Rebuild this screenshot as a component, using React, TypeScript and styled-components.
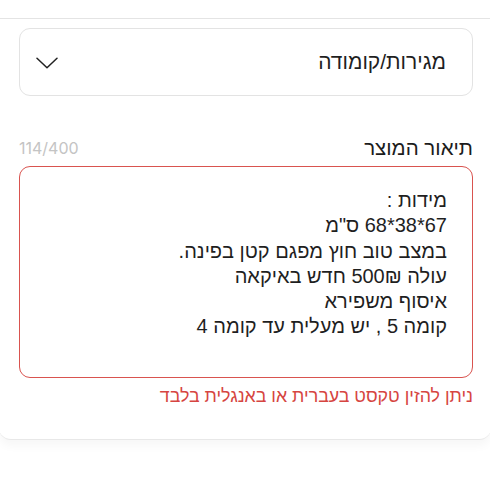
import styled, { createGlobalStyle } from "styled-components";

const GlobalStyle = createGlobalStyle`
  html, body {
    margin: 0;
    padding: 0;
    background: #ffffff;
    font-family: "Liberation Sans", "DejaVu Sans", sans-serif;
    color: #1c1c1c;
  }
  * {
    box-sizing: border-box;
  }
`;

const description = `מידות :
67*38*68 ס"מ
במצב טוב חוץ מפגם קטן בפינה.
עולה 500₪ חדש באיקאה
איסוף משפירא
קומה 5 , יש מעלית עד קומה 4`;

export default function App() {
  return (
    <>
      <GlobalStyle />
      <Page>
        <Card dir="rtl">
          <SelectBox>
            <SelectText>מגירות/קומודה</SelectText>
            <svg width="22" height="12" viewBox="0 0 22 12" fill="none">
              <path d="M1 1.2 L11 10.8 L21 1.2" stroke="#222" strokeWidth="1.5" strokeLinecap="round" strokeLinejoin="round" />
            </svg>
          </SelectBox>

          <LabelRow>
            <Label>תיאור המוצר</Label>
            <Counter>114/400</Counter>
          </LabelRow>

          <TextArea readOnly defaultValue={description} />

          <ErrorText>ניתן להזין טקסט בעברית או באנגלית בלבד</ErrorText>
        </Card>
      </Page>
    </>
  );
}

const Page = styled.div`
  width: 490px;
  height: 480px;
  padding-top: 18px;
  overflow: hidden;
`;

const Card = styled.div`
  margin: 0 -1px 0 -1px;
  background: #fff;
  border-top: 1px solid #e4e4e4;
  border-bottom: 1px solid #e8e8e8;
  border-radius: 0 0 12px 12px;
  box-shadow: 0 6px 10px rgba(0, 0, 0, 0.035);
  padding: 9px 18px 32px 20px;
  display: flex;
  flex-direction: column;
`;

const SelectBox = styled.div`
  height: 68px;
  border: 1px solid #e3e3e3;
  border-radius: 11px;
  display: flex;
  align-items: center;
  justify-content: space-between;
  padding: 0 26px 0 16px;

  svg {
    margin-top: 2px;
  }
`;

const SelectText = styled.span`
  font-size: 21px;
  color: #1f1f1f;
`;

const LabelRow = styled.div`
  display: flex;
  justify-content: space-between;
  align-items: center;
  margin-top: 40px;
  height: 24px;
`;

const Label = styled.span`
  font-size: 20.5px;
  color: #1c1c1c;
`;

const Counter = styled.span`
  font-family: "Inter", "Liberation Sans", sans-serif;
  font-size: 16px;
  color: #c4c4c4;
`;

const TextArea = styled.textarea`
  margin-top: 6px;
  height: 212px;
  width: 100%;
  resize: none;
  border: 1.5px solid #d9534f;
  border-radius: 11px;
  padding: 21px 25px 0 20px;
  font-family: "Liberation Sans", "DejaVu Sans", sans-serif;
  font-size: 20px;
  line-height: 25.3px;
  color: #1f1f1f;
  direction: rtl;
  text-align: right;
  outline: none;
  background: #fff;
`;

const ErrorText = styled.div`
  margin-top: 8px;
  font-size: 17.8px;
  color: #d64541;
`;
